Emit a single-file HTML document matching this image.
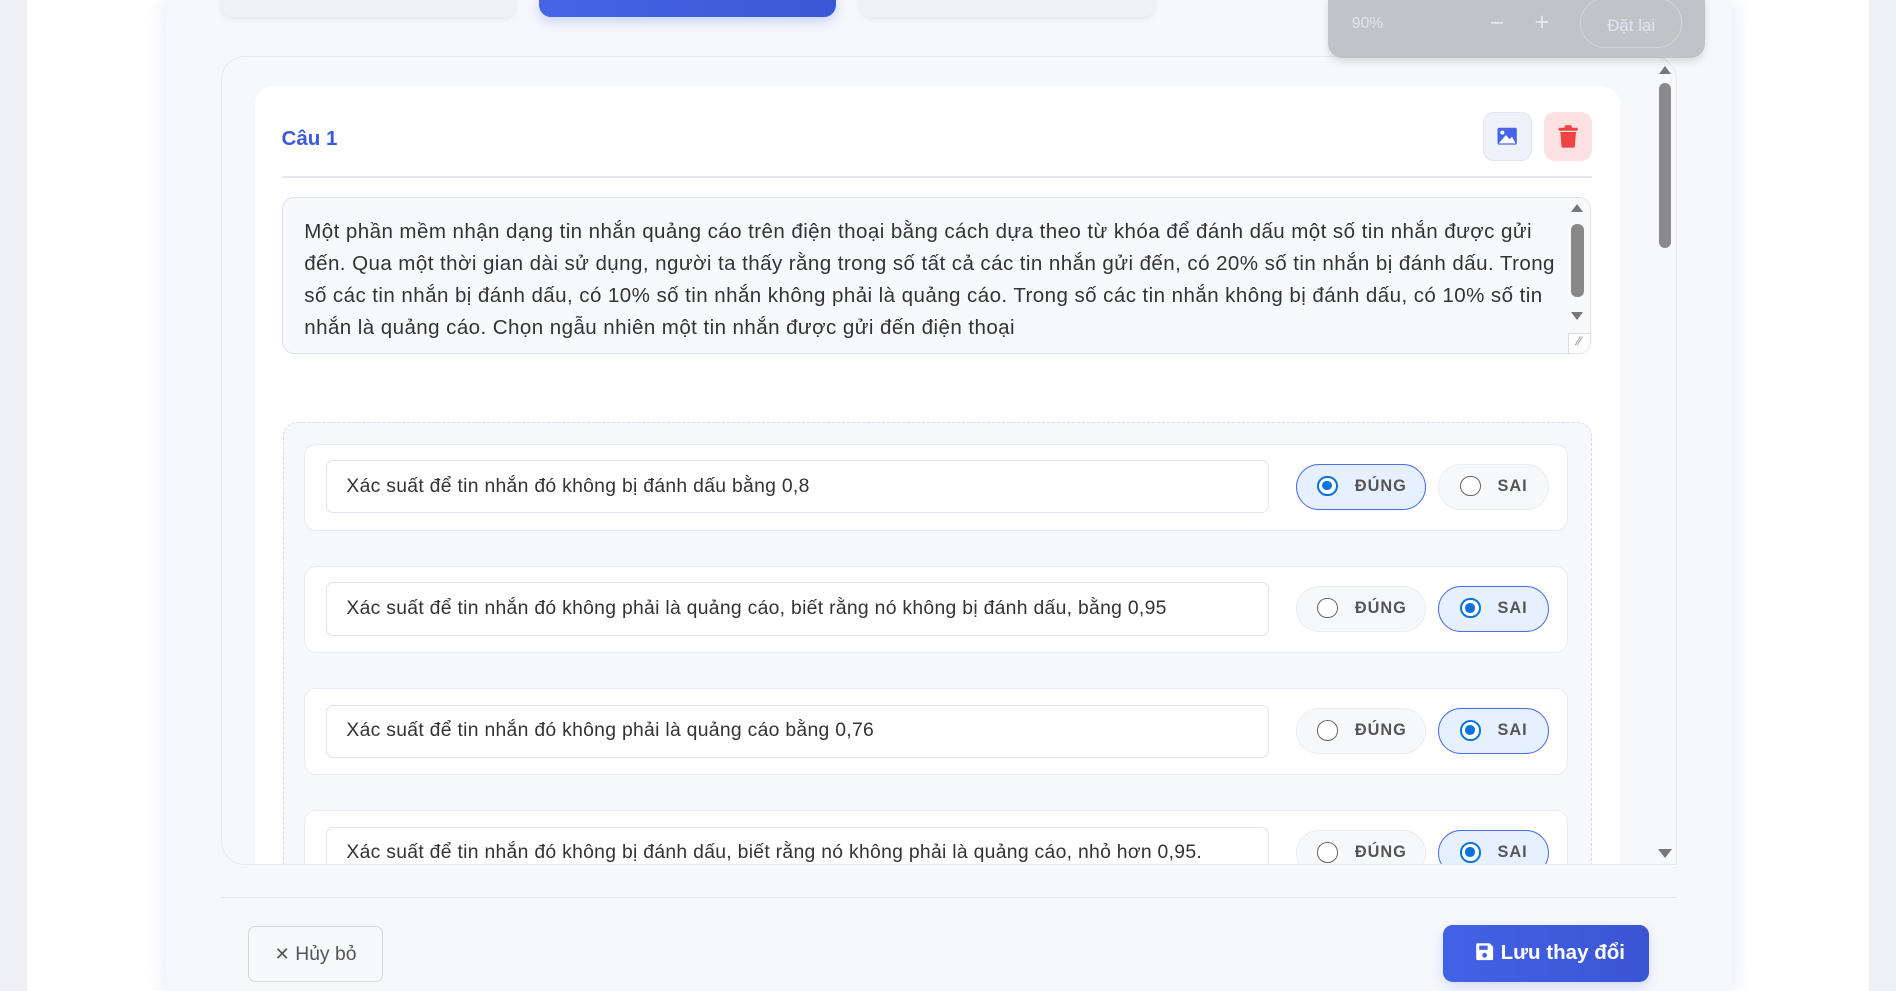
<!DOCTYPE html>
<html><head><meta charset="utf-8"><style>
*{box-sizing:border-box;margin:0;padding:0}
html,body{width:1896px;height:991px;overflow:hidden;background:#eef0f5;font-family:"Liberation Sans",sans-serif}
#w{zoom:1.20918;width:1568px;height:820px;position:relative;overflow:hidden}
.a{position:absolute}
.opt{position:absolute;left:252px;width:1045px;height:72px;background:#fff;border:1px solid #e8ebf2;border-radius:10px}
.inp{position:absolute;left:17px;top:13px;width:780px;height:44px;border:1.5px solid #dfe4ee;border-radius:6px;font-size:16px;letter-spacing:0.25px;color:#333;padding:11px 16px;background:#fff;white-space:nowrap}
.pill{position:absolute;top:16px;height:38px;border-radius:19px;background:#f7f8fa;border:1px solid #ebedf0;font-size:13.5px;font-weight:bold;letter-spacing:0.8px;color:#555}
.pill.on{background:#e6f0ff;border:1px solid #4a6ee0}
.p1{left:819px;width:108px}.p2{left:937px;width:91px}
.rd{position:absolute;left:17px;top:9px;width:17px;height:17px;border-radius:50%;border:1.5px solid #666;background:#fff}
.on .rd{border:2px solid #0a74da}
.on .rd:after{content:"";position:absolute;left:2.5px;top:2.5px;width:8px;height:8px;border-radius:50%;background:#0a74da}
.pl{position:absolute;left:48px;top:10px}
</style></head><body><div id="w">
<div class="a" style="left:22px;top:0;width:1524px;height:820px;background:#fff"></div>
<div class="a" style="left:137px;top:0;width:1295px;height:820px;background:#f7f8fc;box-shadow:0 0 18px #e3e8fb"></div>
<div class="a" style="left:183px;top:-10px;width:244px;height:24px;background:#eff1f4;border-radius:10px;box-shadow:0 2px 4px #e6e8ee"></div>
<div class="a" style="left:446px;top:-10px;width:245px;height:24px;background:linear-gradient(90deg,#4565e6,#3b57d6);border-radius:10px;box-shadow:0 4px 10px #c9d3f8"></div>
<div class="a" style="left:710px;top:-10px;width:245px;height:24px;background:#eff1f4;border-radius:10px;box-shadow:0 2px 4px #e6e8ee"></div>

<div class="a" style="left:183px;top:46px;width:1204px;height:669px;border:1px solid #e6e9f2;border-radius:20px 20px 0 20px;background:#f7f8fc;overflow:hidden">
 <div class="a" style="left:27px;top:24px;width:1129px;height:700px;background:#fff;border-radius:16px">
  <div class="a" style="left:22px;top:34px;font-size:17px;font-weight:bold;color:#3b5bdb">Câu 1</div>
  <div class="a" style="left:1016px;top:22px;width:40px;height:40px;border-radius:9px;background:#eef2f8;border:1px solid #e0e6ef">
   <svg width="40" height="40" viewBox="0 0 40 40" style="position:absolute;left:-1px;top:-1px"><rect x="12" y="13" width="16" height="14" rx="1.5" fill="#4565e6"/><circle cx="16" cy="17" r="1.7" fill="#fff"/><path d="M13 26 L19 19 L22 22.5 L24 20.5 L27 26 Z" fill="#fff"/></svg></div>
  <div class="a" style="left:1066px;top:22px;width:40px;height:40px;border-radius:9px;background:#fde0e0">
   <svg width="40" height="40" viewBox="0 0 40 40" style="position:absolute;left:0;top:0"><rect x="12" y="13" width="16" height="2.5" rx="1" fill="#ee4444"/><rect x="17" y="11" width="6" height="3" rx="1" fill="#ee4444"/><path d="M13.5 16.5 H26.5 L25.5 28.5 Q25.4 29.5 24.5 29.5 H15.5 Q14.6 29.5 14.5 28.5 Z" fill="#ee4444"/></svg></div>
  <div class="a" style="left:22px;top:75px;width:1084px;height:1px;background:#e6e8ec"></div>
  <div class="a" style="left:22px;top:92px;width:1083px;height:130px;background:#f8f9fd;border:1.5px solid #dde3ee;border-radius:10px;overflow:hidden">
   <div class="a" style="left:18px;top:15px;width:1040px;font-size:17px;letter-spacing:0.35px;line-height:26.5px;color:#333">Một phần mềm nhận dạng tin nhắn quảng cáo trên điện thoại bằng cách dựa theo từ khóa để đánh dấu một số tin nhắn được gửi đến. Qua một thời gian dài sử dụng, người ta thấy rằng trong số tất cả các tin nhắn gửi đến, có 20% số tin nhắn bị đánh dấu. Trong số các tin nhắn bị đánh dấu, có 10% số tin nhắn không phải là quảng cáo. Trong số các tin nhắn không bị đánh dấu, có 10% số tin nhắn là quảng cáo. Chọn ngẫu nhiên một tin nhắn được gửi đến điện thoại</div>
   <div class="a" style="left:1062px;top:0;width:19px;height:112px;background:#f8f9fd"></div>
   <div class="a" style="left:1066px;top:5px;border:5px solid transparent;border-bottom:7px solid #777;border-top:0"></div>
   <div class="a" style="left:1066px;top:22px;width:10px;height:60px;border-radius:5px;background:#888"></div>
   <div class="a" style="left:1066px;top:94px;border:5px solid transparent;border-top:7px solid #777;border-bottom:0"></div>
   <div class="a" style="left:1063px;top:112px;width:18px;height:16px;border-top:1px solid #ddd;border-left:1px solid #ddd;background:#fff;font-size:10px;color:#888;text-align:center">⁄⁄</div>
  </div>
 </div>
 <div class="a" style="left:50px;top:302px;width:1083px;height:400px;border:1px dashed #d5dbe8;border-radius:12px;background:#f7f8fc"></div>
 <div class="a" style="left:1188px;top:8px;border:5px solid transparent;border-bottom:7px solid #777;border-top:0"></div>
 <div class="a" style="left:1188px;top:22px;width:10px;height:136px;border-radius:5px;background:#8a8a8a"></div>
 <div class="a" style="left:1187px;top:655px;border:6px solid transparent;border-top:8px solid #777;border-bottom:0"></div>
 <div style="position:absolute;left:-184px;top:-47px;width:1568px;height:820px">
  <div class="opt" style="top:367px"><div class="inp">Xác suất để tin nhắn đó không bị đánh dấu bằng 0,8</div><div class="pill p1 on"><span class="rd"></span><span class="pl">ĐÚNG</span></div><div class="pill p2"><span class="rd"></span><span class="pl">SAI</span></div></div>
  <div class="opt" style="top:468px"><div class="inp">Xác suất để tin nhắn đó không phải là quảng cáo, biết rằng nó không bị đánh dấu, bằng 0,95</div><div class="pill p1"><span class="rd"></span><span class="pl">ĐÚNG</span></div><div class="pill p2 on"><span class="rd"></span><span class="pl">SAI</span></div></div>
  <div class="opt" style="top:569px"><div class="inp">Xác suất để tin nhắn đó không phải là quảng cáo bằng 0,76</div><div class="pill p1"><span class="rd"></span><span class="pl">ĐÚNG</span></div><div class="pill p2 on"><span class="rd"></span><span class="pl">SAI</span></div></div>
  <div class="opt" style="top:670px"><div class="inp">Xác suất để tin nhắn đó không bị đánh dấu, biết rằng nó không phải là quảng cáo, nhỏ hơn 0,95.</div><div class="pill p1"><span class="rd"></span><span class="pl">ĐÚNG</span></div><div class="pill p2 on"><span class="rd"></span><span class="pl">SAI</span></div></div>
 </div>
</div>

<div class="a" style="left:1098px;top:-10px;width:312px;height:58px;background:rgba(185,186,190,0.85);border-radius:12px;box-shadow:0 3px 6px rgba(0,0,0,0.12)">
 <div class="a" style="left:20px;top:22px;font-size:13px;color:#e2e4ea">90%</div>
 <div class="a" style="left:134px;top:18px;font-size:20px;color:#e8e9ee">−</div>
 <div class="a" style="left:171px;top:17px;font-size:21px;color:#e8e9ee">+</div>
 <div class="a" style="left:209px;top:8px;width:84px;height:42px;border:1.5px solid #d5d6da;border-radius:21px;font-size:14px;color:#e2e6f2;text-align:center;padding-top:14px">Đặt lại</div>
</div>

<div class="a" style="left:183px;top:742px;width:1204px;height:1px;background:#e6e8ee"></div>
<div class="a" style="left:205px;top:766px;width:112px;height:46px;border:1px solid #d8d8dc;border-radius:6px;background:#f8f9fb;font-size:16px;color:#555;text-align:center;padding-top:13px"><span style="font-size:15px">✕</span> Hủy bỏ</div>
<div class="a" style="left:1193px;top:765px;width:171px;height:47px;border-radius:8px;background:linear-gradient(90deg,#4262e5,#3b55d4);box-shadow:0 4px 10px #d3dbf8;color:#fff;font-size:17px;font-weight:bold;padding:13px 0 0 27px">
 <svg width="16" height="16" viewBox="0 0 16 16" style="vertical-align:-2px;margin-right:5px"><path d="M1 2 Q1 1 2 1 H12 L15 4 V14 Q15 15 14 15 H2 Q1 15 1 14 Z" fill="#fff"/><rect x="3.5" y="3" width="7" height="3.5" fill="#4262e5"/><circle cx="8" cy="11" r="2" fill="#4262e5"/></svg>Lưu thay đổi</div>
</div></body></html>
